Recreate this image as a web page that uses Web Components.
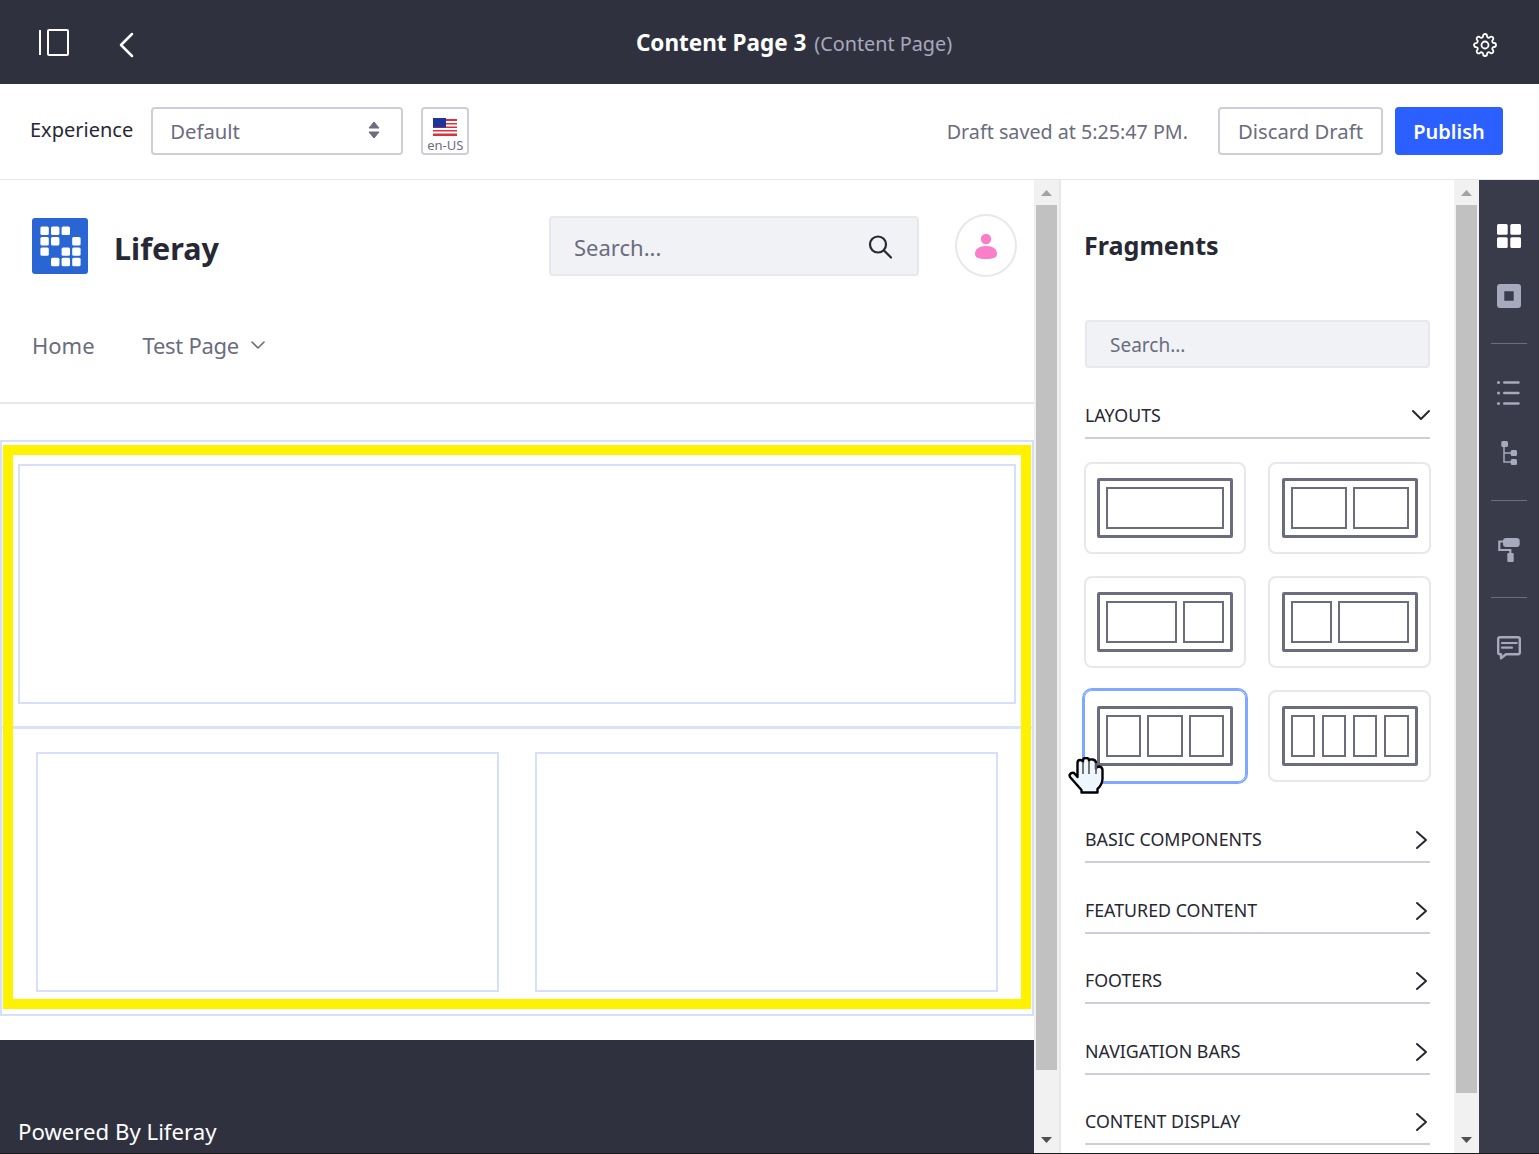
<!DOCTYPE html>
<html lang="en">
<head>
<meta charset="utf-8">
<title>Content Page 3</title>
<style>
	html, body {
		height: 1154px;
		margin: 0;
		overflow: hidden;
	}
	body {
		background: #fff;
		color: #272833;
		font-family: "Noto Sans", "Liberation Sans", sans-serif;
	}
	.main {
		display: flex;
		height: 973px;
		overflow: hidden;
	}
	.edge {
		background: #1c1c1f;
		height: 1px;
	}
</style>
</head>
<body>
<lr-topbar></lr-topbar>
<lr-toolbar></lr-toolbar>
<div class="main">
	<lr-page></lr-page>
	<lr-scrollbar thumb="865" divider></lr-scrollbar>
	<lr-panel>
		<lr-section label="LAYOUTS" open></lr-section>
		<lr-layout-grid slot="grid">
			<lr-layout-card cols="1"></lr-layout-card>
			<lr-layout-card cols="1,1"></lr-layout-card>
			<lr-layout-card cols="71,40"></lr-layout-card>
			<lr-layout-card cols="40,71"></lr-layout-card>
			<lr-layout-card cols="1,1,1" selected></lr-layout-card>
			<lr-layout-card cols="1,1,1,1"></lr-layout-card>
		</lr-layout-grid>
		<lr-section slot="rows" label="BASIC COMPONENTS"></lr-section>
		<lr-section slot="rows" label="FEATURED CONTENT"></lr-section>
		<lr-section slot="rows" label="FOOTERS"></lr-section>
		<lr-section slot="rows" label="NAVIGATION BARS"></lr-section>
		<lr-section slot="rows" label="CONTENT DISPLAY"></lr-section>
	</lr-panel>
	<lr-scrollbar thumb="888"></lr-scrollbar>
	<lr-sidebar></lr-sidebar>
</div>
<div class="edge"></div>

<script>
class LrTopbar extends HTMLElement {
	constructor() {
		super();
		this.attachShadow({ mode: 'open' });
		this.shadowRoot.innerHTML = `
			<style>
				:host {
					align-items: center;
					background: #30313f;
					color: #fff;
					display: flex;
					height: 84px;
					padding: 0 42px 0 38px;
					box-sizing: border-box;
				}
				svg { display: block; }
				.back { margin: 6px 0 0 48px; }
				.gear { margin-top: 6px; }
				.title {
					align-items: baseline;
					display: flex;
					flex: 1;
					gap: 8px;
					justify-content: center;
					padding-right: 21px;
				}
				b { font-size: 22.500px; font-weight: 700; }
				span { color: #a7a9bc; font-size: 19.800px; }
			</style>
			<svg width="32" height="28" viewBox="0 0 32 28" fill="none" stroke="#fff" stroke-width="2">
				<path d="M2 2v25"/>
				<rect x="10" y="2" width="20" height="25" rx="1"/>
			</svg>
			<svg class="back" width="18" height="28" viewBox="0 0 18 28" fill="none" stroke="#fff" stroke-width="2.500" stroke-linecap="round" stroke-linejoin="round">
				<path d="M14 3 3 14l11 11"/>
			</svg>
			<div class="title"><b>Content Page 3</b><span>(Content Page)</span></div>
			<svg class="gear" width="24" height="24" viewBox="0 0 24 24" fill="none" stroke="#fff" stroke-width="1.800" stroke-linejoin="round">
				<circle cx="12" cy="12" r="3.500"/>
				<path d="M19.400 15a1.650 1.650 0 0 0 .33 1.820l.06.06a2 2 0 0 1 0 2.830 2 2 0 0 1-2.830 0l-.06-.06a1.650 1.650 0 0 0-1.820-.33 1.650 1.650 0 0 0-1 1.510V21a2 2 0 0 1-2 2 2 2 0 0 1-2-2v-.09A1.650 1.650 0 0 0 9 19.400a1.650 1.650 0 0 0-1.820.33l-.06.06a2 2 0 0 1-2.830 0 2 2 0 0 1 0-2.830l.06-.06a1.650 1.650 0 0 0 .33-1.820 1.650 1.650 0 0 0-1.510-1H3a2 2 0 0 1-2-2 2 2 0 0 1 2-2h.09A1.650 1.650 0 0 0 4.600 9a1.650 1.650 0 0 0-.33-1.820l-.06-.06a2 2 0 0 1 0-2.830 2 2 0 0 1 2.830 0l.06.06a1.650 1.650 0 0 0 1.820.33H9a1.650 1.650 0 0 0 1-1.510V3a2 2 0 0 1 2-2 2 2 0 0 1 2 2v.09a1.650 1.650 0 0 0 1 1.510 1.650 1.650 0 0 0 1.820-.33l.06-.06a2 2 0 0 1 2.830 0 2 2 0 0 1 0 2.830l-.06.06a1.650 1.650 0 0 0-.33 1.820V9a1.650 1.650 0 0 0 1.510 1H21a2 2 0 0 1 2 2 2 2 0 0 1-2 2h-.09a1.650 1.650 0 0 0-1.510 1z"/>
			</svg>
		`;
	}
}

class LrToolbar extends HTMLElement {
	constructor() {
		super();
		this.attachShadow({ mode: 'open' });
		this.shadowRoot.innerHTML = `
			<style>
				* { box-sizing: border-box; }
				:host {
					align-items: center;
					border-bottom: 1px solid #e7e7ed;
					box-sizing: border-box;
					display: flex;
					height: 96px;
					padding: 0 36px 1px 30px;
				}
				.label {
					color: #272833;
					font-size: 20px;
					margin: -4px 18px 0 0;
				}
				.box {
					align-items: center;
					border: 2px solid #cdced9;
					border-radius: 4px;
					color: #6b6c7e;
					display: flex;
					font-size: 20.300px;
					height: 48px;
				}
				.select {
					justify-content: space-between;
					padding: 0 21px 0 17px;
					width: 252px;
				}
				.select svg { margin-top: -2px; }
				.lang {
					flex-direction: column;
					font-size: 13px;
					justify-content: flex-start;
					line-height: 16px;
					margin-left: 18px;
					padding-top: 9px;
					width: 48px;
				}
				.lang svg { display: block; margin-bottom: 1px; }
				.draft {
					color: #6b6c7e;
					font-size: 19.700px;
					margin-left: auto;
				}
				.discard {
					justify-content: center;
					margin-left: 30px;
					width: 165px;
				}
				.publish {
					background: #2b5fff;
					border-color: #2b5fff;
					color: #fff;
					font-size: 20px;
					font-weight: 600;
					justify-content: center;
					margin-left: 12px;
					width: 108px;
				}
			</style>
			<span class="label">Experience</span>
			<div class="box select">
				<span>Default</span>
				<svg width="12" height="18" viewBox="0 0 12 18" fill="#6b6c7e" stroke="#6b6c7e" stroke-linejoin="round"><path d="M6 1l5 6H1zM6 17l5-6H1z"/></svg>
			</div>
			<div class="box lang">
				<svg width="24" height="18" viewBox="0 0 24 18">
					<rect width="24" height="18" fill="#fff"/>
					<path d="M0 1h24v2H0zM0 5h24v1.500H0zM0 8.500h24V10H0zM0 12h24v1.500H0zM0 15.500h24V18H0z" fill="#d8323c"/>
					<rect width="13" height="9.500" fill="#1f349b"/>
				</svg>
				<span>en-US</span>
			</div>
			<span class="draft">Draft saved at 5:25:47 PM.</span>
			<div class="box discard">Discard Draft</div>
			<div class="box publish">Publish</div>
		`;
	}
}

class LrPage extends HTMLElement {
	constructor() {
		super();
		this.attachShadow({ mode: 'open' });
		const dots = [[0,0],[1,0],[2,0],[0,1],[1,1],[3,1],[0,2],[2,2],[3,2],[1,3],[2,3],[3,3]]
			.map(([c, r]) => `<rect x="${8.4 + c * 10.6}" y="${8.6 + r * 10.4}" width="8.400" height="8.400" rx="1.500" fill="#fff"/>`)
			.join('');
		this.shadowRoot.innerHTML = `
			<style>
				* { box-sizing: border-box; }
				:host {
					display: block;
					flex: none;
					height: 974px;
					width: 1034px;
				}
				header {
					align-items: center;
					display: flex;
					height: 132px;
					padding: 0 17px 0 32px;
				}
				header svg { display: block; flex: none; }
				.brand {
					color: #272833;
					flex: 1;
					font-size: 30.500px;
					font-weight: 700;
					margin: 4px 0 0 26px;
				}
				.search {
					align-items: center;
					background: #f1f2f5;
					border: 2px solid #e7e7ed;
					border-radius: 4px;
					color: #6b6c7e;
					display: flex;
					font-size: 22px;
					height: 60px;
					justify-content: space-between;
					padding: 1px 24px 0 23px;
					width: 370px;
				}
				.avatar {
					align-items: center;
					border: 2px solid #e7e7ed;
					border-radius: 50%;
					display: flex;
					height: 63px;
					justify-content: center;
					margin: -1px 0 0 36px;
					width: 62px;
				}
				nav {
					align-items: flex-start;
					border-bottom: 2px solid #e7e7ed;
					color: #6b6c7e;
					display: flex;
					font-size: 22px;
					gap: 48px;
					height: 92px;
					line-height: 40px;
					padding: 13px 0 0 32px;
				}
				nav span { align-items: center; display: flex; gap: 11px; }
				nav span + span { letter-spacing: -.3px; }
				section {
					border: 2px solid #d6e0fb;
					height: 576px;
					margin-top: 36px;
					position: relative;
				}
				.row {
					display: flex;
					gap: 36px;
					padding: 22px 16px 22px;
				}
				.row + .row {
					border-top: 3px solid #d9e2fb;
					padding: 23px 34px 22px;
				}
				.col {
					border: 2px solid #d6e0fb;
					flex: 1;
					height: 240px;
				}
				.outline {
					border: 10px solid #fff200;
					bottom: 5px;
					left: 1px;
					position: absolute;
					right: 1px;
					top: 3px;
				}
				footer {
					background: #30313f;
					color: #fff;
					font-size: 22.200px;
					height: 114px;
					margin-top: 24px;
					padding: 76px 0 0 18px;
				}
			</style>
			<header>
				<svg width="56" height="56" viewBox="0 0 56 56">
					<rect width="56" height="56" rx="3" fill="#2a66d3"/>
					${dots}
				</svg>
				<span class="brand">Liferay</span>
				<div class="search">
					<span>Search...</span>
					<svg width="26" height="26" viewBox="0 0 26 26" fill="none" stroke="#272833" stroke-width="2.200" stroke-linecap="round">
						<circle cx="11" cy="10.500" r="8"/>
						<path d="M17 16.500l7 7"/>
					</svg>
				</div>
				<div class="avatar">
					<svg width="24" height="26" viewBox="0 0 24 26" fill="#fb7fc8">
						<circle cx="12" cy="6" r="5.200"/>
						<path d="M1 21c0-5 4-8 11-8s11 3 11 8c0 3-3 5-11 5S1 24 1 21z"/>
					</svg>
				</div>
			</header>
			<nav>
				<span>Home</span>
				<span>Test Page
					<svg width="16" height="10" viewBox="0 0 16 10" fill="none" stroke="#6b6c7e" stroke-width="1.600" stroke-linecap="round" stroke-linejoin="round"><path d="M2 2l6 6 6-6"/></svg>
				</span>
			</nav>
			<section>
				<div class="row"><div class="col"></div></div>
				<div class="row"><div class="col"></div><div class="col"></div></div>
				<div class="outline"></div>
			</section>
			<footer>Powered By Liferay</footer>
		`;
	}
}

class LrScrollbar extends HTMLElement {
	constructor() {
		super();
		this.attachShadow({ mode: 'open' });
		this.shadowRoot.innerHTML = `
			<style>
				:host {
					background: #f1f1f1;
					box-sizing: border-box;
					display: block;
					flex: none;
					height: 974px;
					padding: 0 2px;
					position: relative;
					width: 25px;
				}
				:host([divider]) {
					border-right: 2px solid #e7e7ed;
					width: 27px;
				}
				.thumb { background: #c1c1c1; margin-top: 25px; width: 21px; }
				svg { left: 7px; position: absolute; }
				.up { top: 10px; }
				.down { bottom: 11px; }
			</style>
			<svg class="up" width="11" height="6" viewBox="0 0 11 6"><path d="M5.500 0 11 6H0z" fill="#a3a3a3"/></svg>
			<div class="thumb" style="height: ${this.getAttribute('thumb')}px"></div>
			<svg class="down" width="11" height="6" viewBox="0 0 11 6"><path d="M5.500 6 11 0H0z" fill="#505050"/></svg>
		`;
	}
}

class LrPanel extends HTMLElement {
	constructor() {
		super();
		this.attachShadow({ mode: 'open' });
		this.shadowRoot.innerHTML = `
			<style>
				* { box-sizing: border-box; }
				:host {
					background: #fff;
					box-sizing: border-box;
					display: block;
					flex: none;
					height: 974px;
					overflow: hidden;
					padding: 49px 24px 0;
					position: relative;
					width: 393px;
				}
				h2 {
					color: #272833;
					font-size: 25.100px;
					font-weight: 700;
					line-height: 32px;
					margin: 0 0 59px -1px;
				}
				.search {
					align-items: center;
					background: #f1f2f5;
					border: 2px solid #e7e7ed;
					border-radius: 4px;
					color: #6b6c7e;
					display: flex;
					font-size: 19px;
					height: 48px;
					padding: 2px 0 0 23px;
				}
				.grid {
					margin: 23px -1px 11px;
				}
				.cursor {
					left: 7px;
					position: absolute;
					top: 577px;
				}
			</style>
			<h2>Fragments</h2>
			<div class="search">Search...</div>
			<slot></slot>
			<div class="grid"><slot name="grid"></slot></div>
			<slot name="rows"></slot>
			<svg class="cursor" width="36" height="37" viewBox="0 0 36 37" fill="#eef6ff" stroke="#000" stroke-width="2.400" stroke-linejoin="round">
				<path d="M1.500 18Q3 15 6 16l3.500 4V6q0-3 2.500-3t3 2V3q0-2 3-2t3 2v1q0-2 3.500-1.500T28 6v6q0-2.500 3-2.500 3.500.5 3.500 3.500v9q-.5 6-5 10v3.500h-16V33L2 20z"/>
				<path d="M15 5v12M21 4v13M28 6v11" stroke="#666" stroke-width="1.800" fill="none"/>
			</svg>
		`;
	}
}

class LrSection extends HTMLElement {
	constructor() {
		super();
		this.attachShadow({ mode: 'open' });
		const open = this.hasAttribute('open');
		this.shadowRoot.innerHTML = `
			<style>
				:host {
					align-items: center;
					border-bottom: 2px solid #cdced9;
					box-sizing: border-box;
					color: #272833;
					display: flex;
					font-size: 17.800px;
					height: 70.500px;
					justify-content: space-between;
					line-height: 28px;
					padding-top: 24.500px;
				}
				svg { display: block; margin-right: -1px; }
				.closed { margin-top: 2px; }
			</style>
			<span>${this.getAttribute('label')}</span>
			${open
				? '<svg width="20" height="12" viewBox="0 0 20 12" fill="none" stroke="#272833" stroke-width="2" stroke-linecap="round" stroke-linejoin="round"><path d="M2 2l8 8 8-8"/></svg>'
				: '<svg class="closed" width="20" height="20" viewBox="0 0 20 20" fill="none" stroke="#272833" stroke-width="2" stroke-linecap="round" stroke-linejoin="round"><path d="M6 2l9 8-9 8"/></svg>'}
		`;
	}
}

class LrLayoutGrid extends HTMLElement {
	constructor() {
		super();
		this.attachShadow({ mode: 'open' });
		this.shadowRoot.innerHTML = `
			<style>
				:host {
					display: grid;
					gap: 22px;
					grid-template-columns: 162px 163px;
				}
			</style>
			<slot></slot>
		`;
	}
}

class LrLayoutCard extends HTMLElement {
	constructor() {
		super();
		this.attachShadow({ mode: 'open' });
		const cols = this.getAttribute('cols').split(',');
		const cells = cols.map((c) => `<div style="flex: ${c} 1 0"></div>`).join('');
		this.shadowRoot.innerHTML = `
			<style>
				* { box-sizing: border-box; }
				:host {
					align-items: center;
					border: 2px solid #e7e7ed;
					border-radius: 8px;
					box-sizing: border-box;
					display: flex;
					height: 92px;
					justify-content: center;
				}
				:host([selected]) {
					border: 1px solid #80a8ff;
					box-shadow: 0 0 0 2px #80a8ff;
				}
				.frame {
					border: 3px solid #6b6c7e;
					border-radius: 2px;
					display: flex;
					gap: ${cols.length === 4 ? 7 : 6}px;
					height: 60px;
					padding: 6px;
					width: 136px;
				}
				.frame div { border: 2px solid #6b6c7e; }
			</style>
			<div class="frame">${cells}</div>
		`;
	}
}

class LrSidebar extends HTMLElement {
	constructor() {
		super();
		this.attachShadow({ mode: 'open' });
		this.shadowRoot.innerHTML = `
			<style>
				:host {
					align-items: center;
					background: #393a4a;
					box-sizing: border-box;
					display: flex;
					flex-direction: column;
					height: 974px;
					padding-top: 44px;
					width: 60px;
				}
				svg { display: block; flex: none; }
				svg + svg { margin-top: 36px; }
				i {
					background: #6b6c7e;
					display: block;
					flex: none;
					height: 1px;
					margin: 35px 0 37px;
					width: 36px;
				}
				i + svg + i { margin-bottom: 38px; }
			</style>
			<svg width="24" height="24" viewBox="0 0 24 24" fill="#fff">
				<rect width="10.700" height="10.700" rx="1.500"/>
				<rect x="13.300" width="10.700" height="10.700" rx="1.500"/>
				<rect y="13.300" width="10.700" height="10.700" rx="1.500"/>
				<rect x="13.300" y="13.300" width="10.700" height="10.700" rx="1.500"/>
			</svg>
			<svg width="24" height="24" viewBox="0 0 24 24" fill="#a7a9bc">
				<path fill-rule="evenodd" d="M3 0h18a3 3 0 0 1 3 3v18a3 3 0 0 1-3 3H3a3 3 0 0 1-3-3V3a3 3 0 0 1 3-3zM7.300 7.300v9.400h9.400V7.300z"/>
			</svg>
			<i></i>
			<svg width="24" height="24" viewBox="0 0 24 24" fill="#a7a9bc">
				<circle cx="1.500" cy="1.500" r="1.500"/><circle cx="1.500" cy="12" r="1.500"/><circle cx="1.500" cy="22.500" r="1.500"/>
				<rect x="6" y=".300" width="16.700" height="2.500" rx="1.200"/><rect x="6" y="10.800" width="16.700" height="2.500" rx="1.200"/><rect x="6" y="21.300" width="16.700" height="2.500" rx="1.200"/>
			</svg>
			<svg width="24" height="24" viewBox="0 0 24 24" fill="#a7a9bc">
				<rect x="4.300" width="6.700" height="6" rx="1.500"/>
				<rect x="13.700" y="9" width="6.300" height="6" rx="1.500"/>
				<rect x="13.700" y="18" width="6.300" height="6" rx="1.500"/>
				<path d="M7 5v16h8M7 12h8" fill="none" stroke="#a7a9bc" stroke-width="1.500"/>
			</svg>
			<i></i>
			<svg width="24" height="24" viewBox="0 0 24 24" fill="#a7a9bc">
				<rect x="6" width="16.700" height="9" rx="3"/>
				<path d="M7 3.500H2.300v8.500h11v3.500" fill="none" stroke="#a7a9bc" stroke-width="2.200"/>
				<rect x="10.300" y="15" width="6.400" height="9" rx="1"/>
			</svg>
			<i></i>
			<svg width="24" height="24" viewBox="0 0 24 24" fill="none" stroke="#a7a9bc">
				<path d="M3 1.200h18a1.800 1.800 0 0 1 1.800 1.800v13.500a1.800 1.800 0 0 1-1.800 1.800H9l-5 4v-4H3a1.800 1.800 0 0 1-1.800-1.800V3A1.800 1.800 0 0 1 3 1.200z" stroke-width="2.400" stroke-linejoin="round"/>
				<path d="M5 7h14.700M5 11.700h10" stroke-width="2.200" stroke-linecap="round"/>
			</svg>
		`;
	}
}

customElements.define('lr-topbar', LrTopbar);
customElements.define('lr-toolbar', LrToolbar);
customElements.define('lr-page', LrPage);
customElements.define('lr-scrollbar', LrScrollbar);
customElements.define('lr-panel', LrPanel);
customElements.define('lr-section', LrSection);
customElements.define('lr-layout-grid', LrLayoutGrid);
customElements.define('lr-layout-card', LrLayoutCard);
customElements.define('lr-sidebar', LrSidebar);
</script>
</body>
</html>
